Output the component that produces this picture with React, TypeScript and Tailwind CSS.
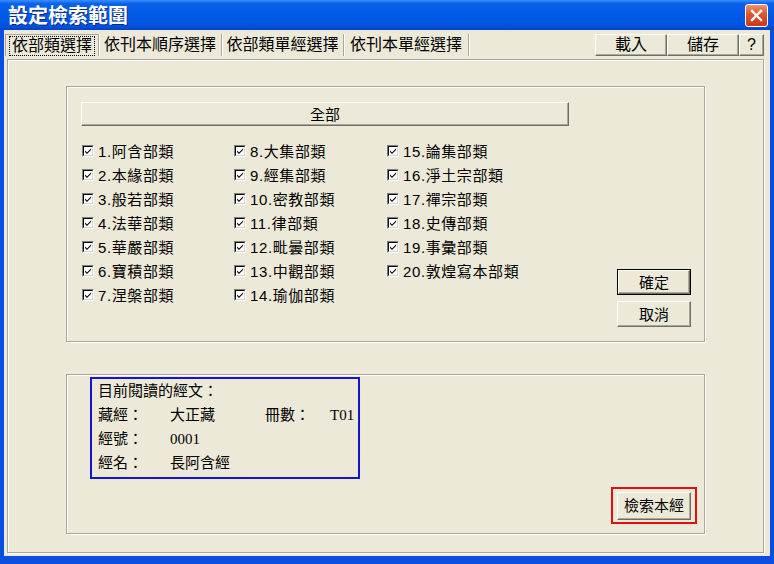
import React from 'react'

const font = { fontFamily: '"Liberation Sans", "Noto Sans CJK TC", sans-serif' }

const cols = [
  ['1.阿含部類', '2.本緣部類', '3.般若部類', '4.法華部類', '5.華嚴部類', '6.寶積部類', '7.涅槃部類'],
  ['8.大集部類', '9.經集部類', '10.密教部類', '11.律部類', '12.毗曇部類', '13.中觀部類', '14.瑜伽部類'],
  ['15.論集部類', '16.淨土宗部類', '17.禪宗部類', '18.史傳部類', '19.事彙部類', '20.敦煌寫本部類'],
]

const tabs = [
  { label: '依部類選擇', w: 'w-[94px]' },
  { label: '依刊本順序選擇', w: 'w-[123px]' },
  { label: '依部類單經選擇', w: 'w-[122px]' },
  { label: '依刊本單經選擇', w: 'w-[125px]' },
]

const raised =
  'bg-[#ECE9D8] border border-t-white border-l-white border-r-[#716F64] border-b-[#716F64] shadow-[inset_-1px_-1px_0_#ACA899]'

function CheckBox() {
  return (
    <div className="w-[12px] h-[12px] border border-t-[#808080] border-l-[#808080] border-r-white border-b-white">
      <div className="w-full h-full bg-white border border-t-black border-l-black border-r-[#D4D0C8] border-b-[#D4D0C8] flex items-center justify-center">
        <svg width="8" height="8" viewBox="0 0 8 8">
          <path d="M1 3.5 L3 5.5 L7 1.5 L7 3 L3 7 L1 5 Z" fill="#000" />
        </svg>
      </div>
    </div>
  )
}

function Btn({ label, isDefault }: { label: string; isDefault?: boolean }) {
  if (isDefault) {
    return (
      <div className="w-[74px] h-[26px] border border-black">
        <div className={`${raised} w-full h-full flex items-center justify-center text-[15px] leading-none`}>{label}</div>
      </div>
    )
  }
  return (
    <div className={`${raised} w-[74px] h-[26px] flex items-center justify-center text-[15px] leading-none`}>{label}</div>
  )
}

export default function App() {
  return (
    <div className="w-[774px] h-[564px] flex flex-col bg-[#0a4fe0] overflow-hidden text-black" style={font}>
      {/* title bar */}
      <div className="h-[30px] shrink-0 flex items-center pl-[8px] pr-[6px] bg-[linear-gradient(180deg,#3c8eff_0%,#0a62ec_12%,#0058e6_50%,#0052de_88%,#0044c4_100%)]">
        <span
          className="text-white font-bold text-[20px] leading-none [text-shadow:1px_1px_0_#0a2a8a]"
          style={{ fontFamily: '"Noto Sans CJK TC", sans-serif' }}
        >
          設定檢索範圍
        </span>
        <div className="ml-auto w-[23px] h-[23px] rounded-[3px] border border-white bg-[linear-gradient(180deg,#f0906c_0%,#e0542e_45%,#c8381a_100%)] flex items-center justify-center">
          <svg width="13" height="13" viewBox="0 0 13 13">
            <path d="M2 2 L11 11 M11 2 L2 11" stroke="#fff" strokeWidth="2.4" strokeLinecap="square" />
          </svg>
        </div>
      </div>

      {/* client */}
      <div className="flex-1 mx-[4px] mb-[8px] bg-[#ECE9D8] flex flex-col">
        {/* tab row */}
        <div className="mt-[4px] h-[22px] flex pl-[1px] pr-[6px] text-[16px]">
          {tabs.map((t, i) => (
            <div
              key={t.label}
              className={`${t.w} h-full flex items-center justify-center border-r border-[#ACA899] shadow-[1px_0_0_#fff] ${
                i === 0 ? 'border-l border-t' : ''
              }`}
            >
              <span className={`leading-[18px] px-[2px] ${i === 0 ? 'outline outline-1 outline-dotted outline-black' : ''}`}>
                {t.label}
              </span>
            </div>
          ))}
          <div className="flex-1" />
          <div className={`${raised} w-[72px] h-full flex items-center justify-center`}>載入</div>
          <div className={`${raised} w-[72px] h-full flex items-center justify-center`}>儲存</div>
          <div className={`${raised} w-[25px] h-full flex items-center justify-center`}>?</div>
        </div>

        {/* panel */}
        <div className="flex-1 mt-[3px] ml-[3px] mr-[6px] mb-[3px] border border-[#ACA899] shadow-[inset_1px_1px_0_#fff,1px_1px_0_#fff] pl-[58px] pt-[26px] text-[15px]">
          {/* categories group */}
          <div className="w-[639px] h-[256px] border border-[#ACA899] shadow-[inset_1px_1px_0_#fff,1px_1px_0_#fff] flex flex-col pl-[14px] pt-[15px]">
            <div className={`${raised} w-[488px] h-[24px] flex items-center justify-center leading-none`}>全部</div>
            <div className="flex-1 flex mt-[13px]">
              <div className="flex pl-[1px] self-start">
                {cols.map((col, ci) => (
                  <div key={ci} className={ci === 0 ? 'w-[152px]' : ci === 1 ? 'w-[153px]' : 'w-[160px]'}>
                    {col.map((c) => (
                      <div key={c} className="h-[24px] flex items-center gap-[4px] whitespace-nowrap">
                        <CheckBox />
                        <span className="leading-none tracking-[0.6px]">{c}</span>
                      </div>
                    ))}
                  </div>
                ))}
              </div>
              <div className="ml-auto mr-[13px] mb-[14px] self-end flex flex-col gap-[6px]">
                <Btn label="確定" isDefault />
                <Btn label="取消" />
              </div>
            </div>
          </div>

          {/* current text group */}
          <div className="mt-[32px] w-[639px] h-[160px] border border-[#ACA899] shadow-[inset_1px_1px_0_#fff,1px_1px_0_#fff] flex flex-col pl-[23px] pt-[2px]">
            <div className="w-[270px] h-[102px] border-2 border-[#1414d4] pl-[6px] flex flex-col">
              <div className="h-[24px] flex items-center">目前閱讀的經文：</div>
              <div className="h-[24px] flex items-center">
                <span className="w-[72px]">藏經：</span>
                <span className="w-[95px]">大正藏</span>
                <span className="w-[65px]">冊數：</span>
                <span style={{ fontFamily: '"Liberation Serif", serif' }}>T01</span>
              </div>
              <div className="h-[24px] flex items-center">
                <span className="w-[72px]">經號：</span>
                <span style={{ fontFamily: '"Liberation Serif", serif' }}>0001</span>
              </div>
              <div className="h-[24px] flex items-center">
                <span className="w-[72px]">經名：</span>
                <span>長阿含經</span>
              </div>
            </div>
            <div className="mt-auto self-end mr-[7px] mb-[9px] w-[86px] h-[37px] border-2 border-[#e01010] flex items-center justify-center">
              <div className={`${raised} w-[74px] h-[28px] flex items-center justify-center leading-none`}>檢索本經</div>
            </div>
          </div>
        </div>
      </div>
    </div>
  )
}
